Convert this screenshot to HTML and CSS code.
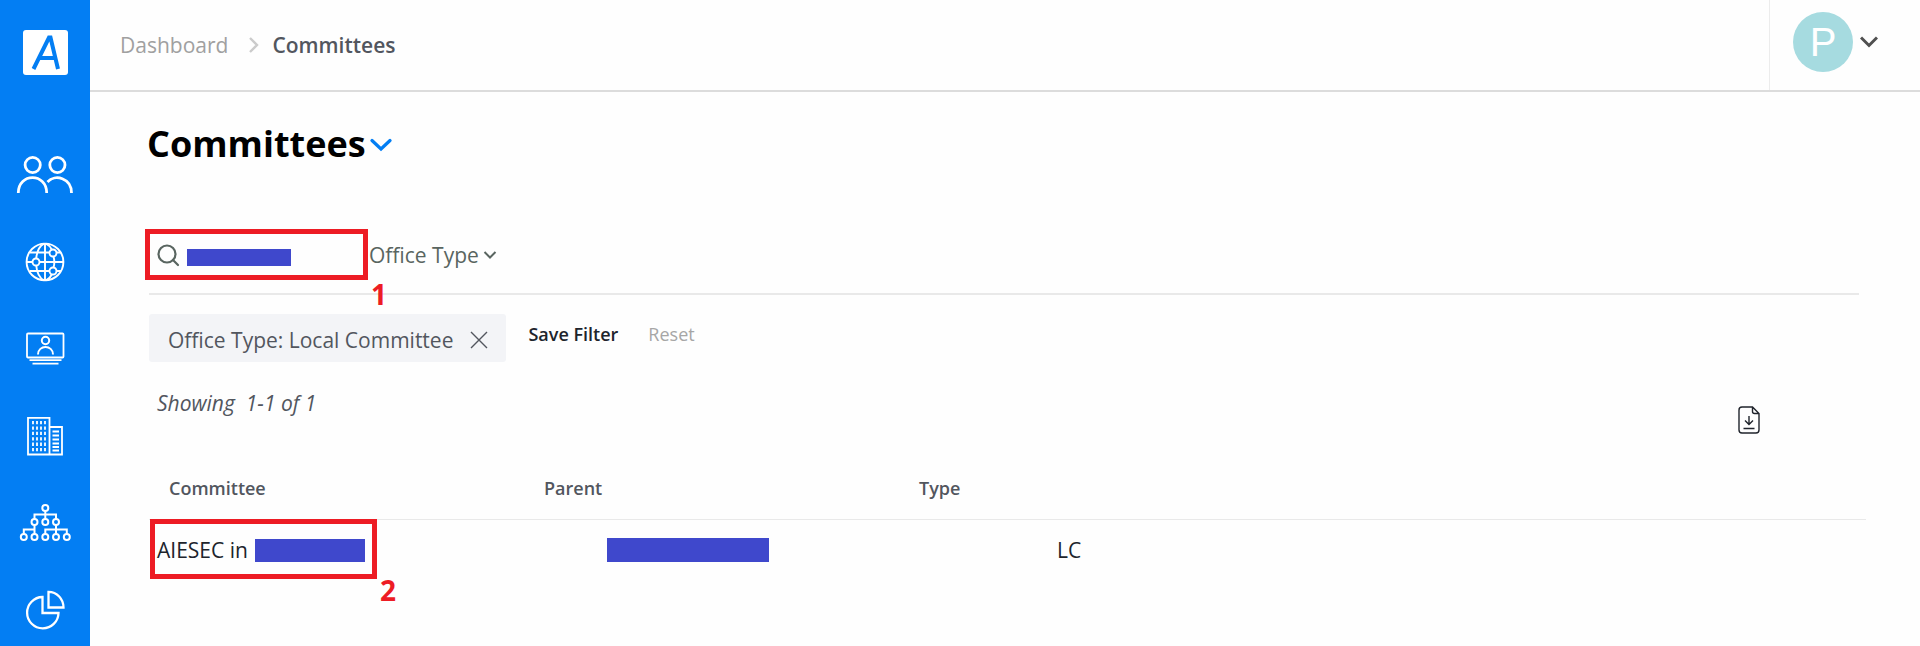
FILE: index.html
```html
<!DOCTYPE html>
<html lang="en">
<head>
<meta charset="utf-8">
<title>Committees</title>
<link rel="stylesheet" href="styles.css">
</head>
<body>
<div class="shell">
  <aside class="sidebar">
    <a class="logo" href="#" aria-label="Home">
      <svg width="45" height="45" viewBox="0 0 45 45" fill="none" stroke="#037ef3" stroke-width="4"><path d="M10.500 39 26 7.500H27.500L35 39M16 28H33"/></svg>
    </a>
    <nav class="nav" aria-label="Main">
      <a class="nav-link" href="#" aria-label="People">
        <svg width="58" height="40" viewBox="0 0 58 40" stroke-width="2.8"><circle cx="16.7" cy="10" r="7.6"/><circle cx="41.4" cy="10" r="7.6"/><path d="M2.3 38C2.3 17.500 30.700 17.500 30.700 38M31.500 27C39 18.500 55.500 23 55.500 38"/></svg>
      </a>
      <a class="nav-link" href="#" aria-label="Opportunities">
        <svg width="40" height="40" viewBox="0 0 40 40" stroke-width="1.9"><circle cx="20" cy="20" r="18.400"/><path d="M20 1.600V38.400M1.600 20H7.500M14.500 20H38.400M5 10.500H24M32 10.500H36M5 29H24M32 29H36M19 1.600C14.500 4 11.800 10 11.200 16.500M11.200 23.500C11.800 30 14.500 36 19 38.400M21 1.600Q25 3.500 26.800 7.500M28.500 14.500Q30.200 20 28.500 25.500M26.800 32.500Q25 36.500 21 38.400"/><circle cx="11" cy="20" r="3.500"/><circle cx="28" cy="11" r="3.500"/><circle cx="28" cy="29" r="3.500"/></svg>
      </a>
      <a class="nav-link" href="#" aria-label="Presentations">
        <svg width="40" height="40" viewBox="0 0 40 40" stroke-width="1.8"><rect x="2" y="4.500" width="36.500" height="24" rx="1"/><circle cx="20.500" cy="11.500" r="3.700" stroke-width="2"/><path d="M13 25.500C13 15.500 28 15.500 28 25.500" stroke-width="2"/><path d="M4.500 31.200H36.500M7.500 34.700H33.500"/></svg>
      </a>
      <a class="nav-link" href="#" aria-label="Companies">
        <svg width="40" height="40" viewBox="0 0 40 40" stroke-width="1.800"><path d="M3 1.800H24.500V38.500H3ZM24.500 11H37V38.500H24.500"/><path d="M8 5V36M12 5V36M16 5V36M20 5V36" stroke-dasharray="3.300 2.100"/><path d="M27.500 15.500H34M27.500 19.500H34M27.500 23.500H34M27.500 27.500H34M27.500 31H34M27.500 34.500H34"/></svg>
      </a>
      <a class="nav-link" href="#" aria-label="Committees">
        <svg width="52" height="40" viewBox="0 0 52 40" stroke-width="2"><circle cx="26.300" cy="5" r="3"/><circle cx="15.500" cy="19" r="3"/><circle cx="26.300" cy="19" r="3"/><circle cx="37" cy="19" r="3"/><circle cx="4.800" cy="34" r="3"/><circle cx="15.500" cy="34" r="3"/><circle cx="26.300" cy="34" r="3"/><circle cx="37" cy="34" r="3"/><circle cx="47.800" cy="34" r="3"/><path d="M26.300 8V16M15.500 16V11.500H37V16M15.500 22V31M4.800 31V26.500H15.500M37 22V31M26.300 31V26.500H47.800V31"/></svg>
      </a>
      <a class="nav-link" href="#" aria-label="Analytics">
        <svg width="40" height="40" viewBox="0 0 40 40" stroke-width="2.300"><path d="M17.500 7A15.700 15.700 0 1 0 33.500 23H17.500ZM23.500 1.800V17.500H38.500C38.500 9 32 1.800 23.500 1.800Z"/></svg>
      </a>
    </nav>
  </aside>
  <div class="page">
    <header class="topbar">
      <nav class="crumbs" aria-label="Breadcrumb">
        <a class="crumb" href="#">Dashboard</a>
        <svg width="10" height="16" viewBox="0 0 10 16" fill="none" stroke="#cbcbcb" stroke-width="2.400"><path d="M1 1 8 8 1 15"/></svg>
        <span class="crumb-current">Committees</span>
      </nav>
      <button class="account" type="button" aria-label="Account menu">
        <span class="avatar">P</span>
        <svg width="18" height="12" viewBox="0 0 18 12" fill="none" stroke="#505050" stroke-width="3"><path d="M1 1.500 9 9.500 17 1.500"/></svg>
      </button>
    </header>
    <main class="content">
      <div class="title-row">
        <h1 class="title">Committees</h1>
        <button class="title-toggle" type="button" aria-label="Switch view">
          <svg width="22" height="14" viewBox="0 0 22 14" fill="none" stroke="#037ef3" stroke-width="3.200" stroke-linecap="round"><path d="M2 2.500 11 11 20 2.500"/></svg>
        </button>
      </div>
      <div class="filters">
        <label class="search">
          <svg width="24" height="24" viewBox="0 0 24 24" fill="none" stroke="#596560" stroke-width="2.200" stroke-linecap="round"><circle cx="11" cy="11" r="8.500"/><path d="M17 17 22 22"/></svg>
          <span class="search-field"><input class="search-input" type="text" aria-label="Search committees"><span class="redaction redaction-search"></span></span>
          <span class="callout callout-search"><span class="callout-number">1</span></span>
        </label>
        <label class="office">
          <select class="office-select" aria-label="Office Type"><option>Office Type</option></select>
          <svg width="14" height="10" viewBox="0 0 14 10" fill="none" stroke="#596560" stroke-width="2"><path d="M1.500 2 7 7.500 12.500 2"/></svg>
        </label>
      </div>
      <div class="applied">
        <span class="chip">Office Type: Local Committee
          <button class="chip-remove" type="button" aria-label="Remove filter"><svg width="18" height="18" viewBox="0 0 18 18" fill="none" stroke="#52565e" stroke-width="1.400"><path d="M1 1 17 17M17 1 1 17"/></svg></button>
        </span>
        <button class="save" type="button">Save Filter</button>
        <button class="reset" type="button">Reset</button>
      </div>
      <div class="summary">
        <p class="showing">Showing&nbsp; 1-1 of 1</p>
        <button class="export" type="button" aria-label="Download">
          <svg width="22" height="28" viewBox="0 0 22 28" fill="none" stroke="#20242c" stroke-width="1.400"><path d="M14.500 1H4Q1 1 1 4V24Q1 27 4 27H18Q21 27 21 24V7.500ZM14.500 1V5.500Q14.500 7.500 16.500 7.500H21M11 10V18.500M7 14.500 11 18.500 15 14.500M5.500 22.500H16.500"/></svg>
        </button>
      </div>
      <table class="table">
        <thead>
          <tr class="head-row"><th>Committee</th><th>Parent</th><th>Type</th></tr>
        </thead>
        <tbody>
          <tr class="body-row">
            <td>AIESEC in <span class="redaction redaction-name"></span><span class="callout callout-row"><span class="callout-number">2</span></span></td>
            <td><span class="redaction redaction-parent"></span></td>
            <td>LC</td>
          </tr>
        </tbody>
      </table>
    </main>
  </div>
</div>
</body>
</html>
```
FILE: styles.css
```css
* {
  box-sizing: border-box;
}

body {
  margin: 0;
  background: #fefefe;
  color: #52565e;
  font: 21px/28px "Open Sans", "Noto Sans", sans-serif;
}

button,
input,
select {
  margin: 0;
  padding: 0;
  border: 0;
  background: none;
  color: inherit;
  font: inherit;
}

a {
  color: inherit;
  text-decoration: none;
}

svg {
  display: block;
  flex: none;
}

.shell {
  display: flex;
  min-height: 100vh;
}

.sidebar {
  flex: none;
  display: flex;
  flex-direction: column;
  align-items: center;
  gap: 80px;
  width: 90px;
  padding-top: 30px;
  background: #037ef3;
}

.logo {
  border-radius: 3px;
  background: #fff;
}

.nav {
  display: flex;
  flex-direction: column;
  align-items: center;
  gap: 47px;
}

.nav-link svg {
  fill: none;
  stroke: #fff;
}

.page {
  flex: 1;
  min-width: 0;
}

.topbar {
  display: flex;
  justify-content: space-between;
  border-bottom: 2px solid #dcdcdc;
}

.crumbs {
  display: flex;
  align-items: center;
  height: 90px;
  padding-left: 30px;
}

.crumb {
  margin-right: 21px;
  color: #a0a0a0;
}

.crumb-current {
  margin-left: 13px;
  font-weight: 600;
}

.account {
  display: flex;
  align-items: center;
  gap: 7px;
  padding: 0 42px 6px 23px;
  border-left: 1px solid #ececec;
}

.avatar {
  width: 60px;
  border-radius: 50%;
  background: #a6dbe0;
  color: #fff;
  font: 40px/60px "Liberation Sans", sans-serif;
  text-align: center;
}

.content {
  padding: 28px 54px 0 59px;
}

.title-row {
  display: flex;
  align-items: center;
  gap: 4px;
  margin-left: -2px;
}

.title {
  margin: 0;
  color: #000;
  font-size: 36px;
  line-height: 48px;
}

.title-toggle {
  padding-top: 2px;
}

.filters {
  display: flex;
  align-items: center;
  gap: 1px;
  margin: 61px 7px 0 0;
  padding-bottom: 13px;
  border-bottom: 2px solid #e9e9e9;
}

.search {
  position: relative;
  display: flex;
  align-items: center;
  gap: 6px;
  width: 219px;
  height: 51px;
  padding: 0 8px 0 7px;
}

.search-field {
  position: relative;
  flex: 1;
}

.search-input {
  display: block;
  width: 100%;
  outline: 0;
}

.office {
  display: flex;
  align-items: center;
  gap: 4px;
  color: #596560;
}

.office-select {
  appearance: none;
}

.redaction {
  background: #3f48cc;
}

.redaction-search {
  position: absolute;
  left: 1px;
  top: 8px;
  width: 104px;
  height: 17px;
}

.redaction-name {
  width: 110px;
  height: 23px;
}

.redaction-parent {
  width: 162px;
  height: 24px;
}

.callout {
  position: absolute;
  border: 5px solid #ed1c24;
  pointer-events: none;
}

.callout-search {
  inset: 0 0 0 -4px;
}

.callout-row {
  top: -1px;
  left: 1px;
  width: 227px;
  height: 60px;
}

.callout-number {
  position: absolute;
  top: 100%;
  left: 100%;
  margin-left: 8px;
  color: #ed1c24;
  font-size: 28px;
  font-weight: 700;
  line-height: 32px;
}

.callout-search .callout-number {
  margin-top: 3px;
}

.applied {
  display: flex;
  align-items: center;
  margin-top: 19px;
}

.chip {
  display: flex;
  align-items: center;
  gap: 17px;
  height: 48px;
  padding: 4px 18px 0 19px;
  border-radius: 3px;
  background: #f3f4f7;
}

.save,
.reset {
  padding-bottom: 8px;
  font-size: 18px;
  line-height: 24px;
}

.save {
  margin-left: 22px;
  color: #20242c;
  font-weight: 600;
}

.reset {
  margin-left: 30px;
  color: #a6a6a6;
}

.summary {
  display: flex;
  justify-content: space-between;
  align-items: flex-end;
  height: 45px;
  margin: 27px 106px 42px 8px;
}

.showing {
  align-self: flex-start;
  margin: 0;
  font-style: italic;
}

.table,
.table thead,
.table tbody {
  display: block;
}

.head-row,
.body-row {
  display: grid;
}

.head-row {
  grid-template-columns: repeat(3, 375px);
  padding: 0 0 19px 20px;
  border-bottom: 1px solid #e9e9e9;
  font-size: 18px;
  line-height: 24px;
  text-align: left;
}

.head-row th {
  padding: 0;
  font-weight: 600;
}

.body-row {
  position: relative;
  grid-template-columns: repeat(3, 450px);
  padding: 16px 0 16px 8px;
  color: #20242c;
}

.body-row td {
  display: flex;
  align-items: center;
  gap: 7px;
  padding: 0;
}
```
